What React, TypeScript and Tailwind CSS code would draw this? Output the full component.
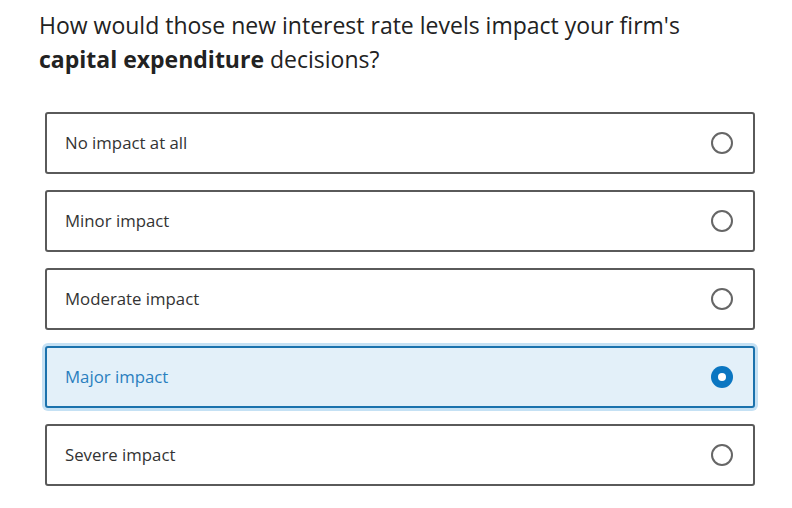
import { useState } from "react"

const options = ["No impact at all", "Minor impact", "Moderate impact", "Major impact", "Severe impact"]

function Radio({ checked }: { checked: boolean }) {
  if (checked) {
    return (
      <span className="w-[22px] h-[22px] rounded-full bg-[#0b76c1] flex items-center justify-center shrink-0">
        <span className="w-[8px] h-[8px] rounded-full bg-white" />
      </span>
    )
  }
  return <span className="w-[22px] h-[22px] rounded-full border-2 border-[#666] bg-white shrink-0" />
}

export default function App() {
  const [selected, setSelected] = useState(3)

  return (
    <div className="w-[792px] h-[508px] bg-white font-['Open_Sans',sans-serif] text-[#222]">
      <h1 className="pl-[39px] pt-[8px] text-[23px] leading-[34px] font-normal text-[#222]">
        How would those new interest rate levels impact your firm's
        <br />
        <b className="font-bold">capital expenditure</b> decisions?
      </h1>

      <div className="ml-[45px] mt-[36px] w-[710px] flex flex-col gap-[16px]">
        {options.map((label, i) => {
          const active = i === selected
          return (
            <button
              key={label}
              onClick={() => setSelected(i)}
              className={
                active
                  ? "h-[62px] flex items-center justify-between pl-[18px] pr-[20px] rounded-[3px] border-2 border-[#1b72ad] bg-[#e3f0f9] ring-[3px] ring-[#c5e1f4] text-left"
                  : "h-[62px] flex items-center justify-between pl-[18px] pr-[20px] rounded-[3px] border-2 border-[#5a5a5a] bg-white text-left"
              }
            >
              <span className={active ? "text-[16.8px] text-[#2a7fbf]" : "text-[16.8px] text-[#333]"}>{label}</span>
              <Radio checked={active} />
            </button>
          )
        })}
      </div>
    </div>
  )
}
